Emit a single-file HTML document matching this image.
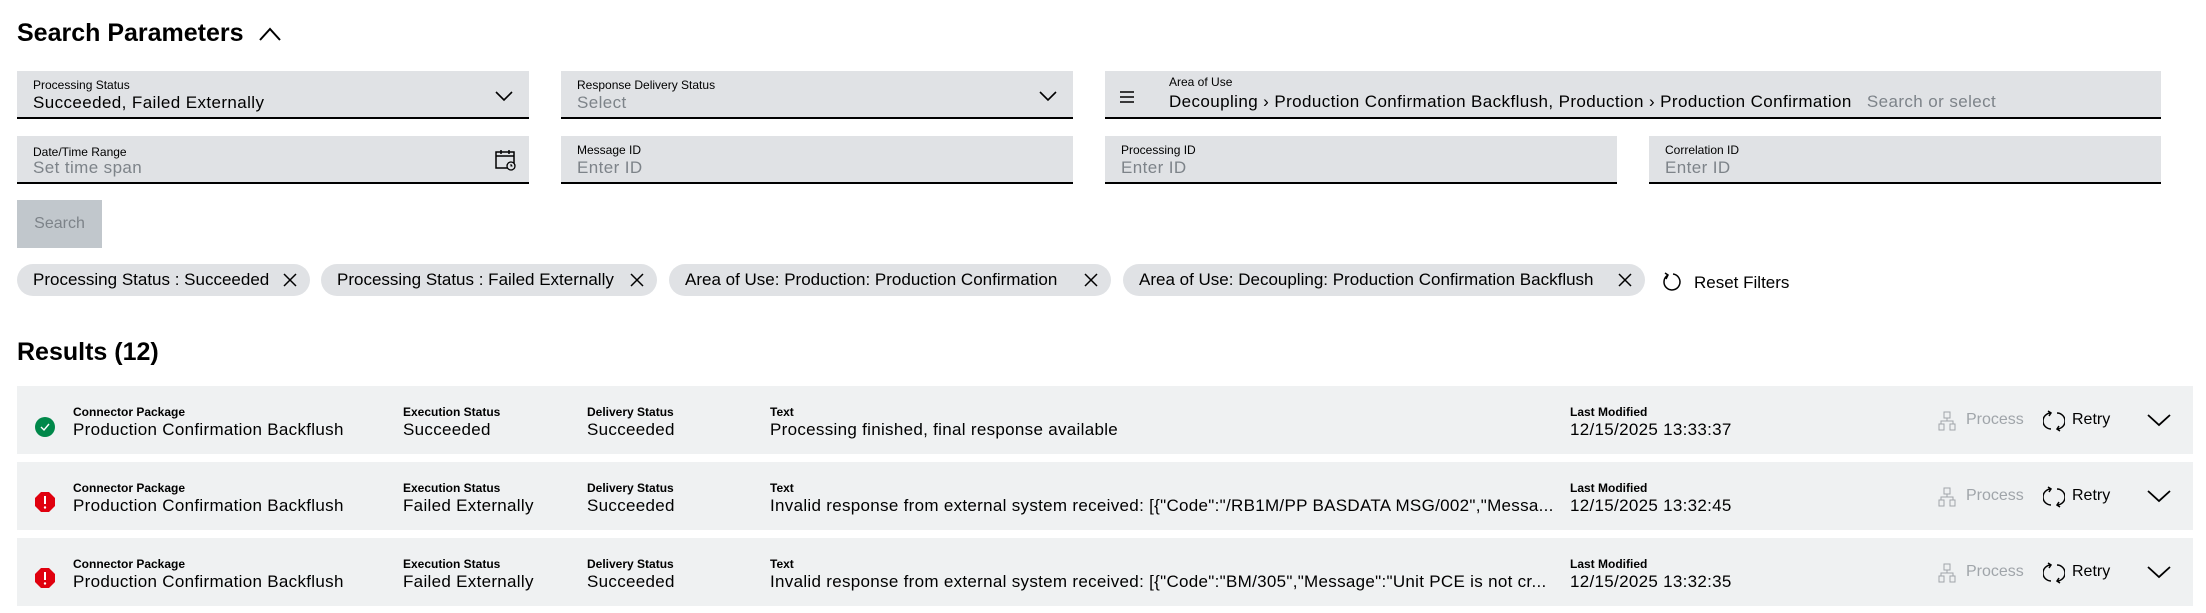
<!DOCTYPE html>
<html><head><meta charset="utf-8"><style>
*{box-sizing:border-box;margin:0;padding:0}
body{width:2206px;height:613px;background:#fff;font-family:"Liberation Sans",sans-serif;color:#000;position:relative;overflow:hidden}
.a{position:absolute;white-space:nowrap}
.h{font-weight:bold;font-size:25px}
.f{position:absolute;background:#e0e2e5;border-bottom:2px solid #000;height:48px}
.fl{position:absolute;left:16px;top:7px;font-size:12px;color:#000}
.fv{position:absolute;left:16px;top:22px;font-size:17px;letter-spacing:0.4px;color:#000;white-space:nowrap}
.ph{color:#7d8389}
.chip{position:absolute;top:264px;height:32px;border-radius:16px;background:#e0e2e5;font-size:17px;letter-spacing:0;line-height:32px;padding-left:16px;white-space:nowrap}
.chip svg{position:absolute;right:12px;top:8px}
.row{position:absolute;left:17px;width:2176px;height:68px;background:#eff1f2}
.lb{position:absolute;top:19px;font-size:12px;font-weight:bold;white-space:nowrap}
.vl{position:absolute;top:34px;font-size:17px;letter-spacing:0.3px;white-space:nowrap}
.pi{position:absolute;left:1938px}
.pt{position:absolute;left:1966px;font-size:16px;color:#a0a5aa}
.ri{position:absolute;left:2043px}
.rt{position:absolute;left:2072px;font-size:16px}
.cv{position:absolute;left:2146px}
</style></head><body>
<div class="a h" style="left:17px;top:19px">Search Parameters</div>
<svg class="a" style="left:258px;top:24px" width="24" height="20" viewBox="0 0 24 20"><path d="M2 16 L12 5 L22 16" fill="none" stroke="#000" stroke-width="2"/></svg>

<div class="f" style="left:17px;top:71px;width:512px"><div class="fl">Processing Status</div><div class="fv">Succeeded, Failed Externally</div>
<svg class="a" style="right:16px;top:19px" width="18" height="12" viewBox="0 0 18 12"><path d="M1 2 L9 10 L17 2" fill="none" stroke="#000" stroke-width="1.6"/></svg></div>
<div class="f" style="left:561px;top:71px;width:512px"><div class="fl">Response Delivery Status</div><div class="fv ph">Select</div>
<svg class="a" style="right:16px;top:19px" width="18" height="12" viewBox="0 0 18 12"><path d="M1 2 L9 10 L17 2" fill="none" stroke="#000" stroke-width="1.6"/></svg></div>
<div class="f" style="left:1105px;top:71px;width:1056px">
<svg class="a" style="left:14px;top:19px" width="16" height="14" viewBox="0 0 16 14"><path d="M1 2H15M1 7H15M1 12H15" stroke="#000" stroke-width="1.5"/></svg>
<div class="fl" style="left:64px;top:4px">Area of Use</div><div class="fv" style="left:64px;top:21px">Decoupling › Production Confirmation Backflush, Production › Production Confirmation <span class="ph" style="margin-left:10px">Search or select</span></div></div>

<div class="f" style="left:17px;top:136px;width:512px"><div class="fl" style="top:9px">Date/Time Range</div><div class="fv ph" style="top:22px">Set time span</div>
<svg class="a" style="right:12px;top:13px" width="22" height="22" viewBox="0 0 22 22"><rect x="1" y="3" width="18" height="16" fill="none" stroke="#000" stroke-width="1.5"/><path d="M1 7H19M6 1V5M14 1V5" stroke="#000" stroke-width="1.5"/><circle cx="16" cy="17" r="4" fill="#e0e2e5" stroke="#000" stroke-width="1.3"/><path d="M16 15V17H17.5" stroke="#000" stroke-width="1"/></svg></div>
<div class="f" style="left:561px;top:136px;width:512px"><div class="fl">Message ID</div><div class="fv ph">Enter ID</div></div>
<div class="f" style="left:1105px;top:136px;width:512px"><div class="fl">Processing ID</div><div class="fv ph">Enter ID</div></div>
<div class="f" style="left:1649px;top:136px;width:512px"><div class="fl">Correlation ID</div><div class="fv ph">Enter ID</div></div>

<div class="a" style="left:17px;top:200px;width:85px;height:48px;background:#c1c7cc;color:#7d8389;font-size:16px;line-height:48px;text-align:center">Search</div>

<div class="chip" style="left:17px;width:293px">Processing Status : Succeeded<svg width="16" height="16" viewBox="0 0 16 16"><path d="M2 2L14 14M14 2L2 14" stroke="#000" stroke-width="1.5"/></svg></div>
<div class="chip" style="left:321px;width:336px">Processing Status : Failed Externally<svg width="16" height="16" viewBox="0 0 16 16"><path d="M2 2L14 14M14 2L2 14" stroke="#000" stroke-width="1.5"/></svg></div>
<div class="chip" style="left:669px;width:442px">Area of Use: Production: Production Confirmation<svg width="16" height="16" viewBox="0 0 16 16"><path d="M2 2L14 14M14 2L2 14" stroke="#000" stroke-width="1.5"/></svg></div>
<div class="chip" style="left:1123px;width:522px">Area of Use: Decoupling: Production Confirmation Backflush<svg width="16" height="16" viewBox="0 0 16 16"><path d="M2 2L14 14M14 2L2 14" stroke="#000" stroke-width="1.5"/></svg></div>
<svg class="a" style="left:1662px;top:271px" width="22" height="22" viewBox="0 0 22 22"><path d="M6 4 A8 8 0 1 0 11 3" fill="none" stroke="#000" stroke-width="1.5"/><path d="M3 2 L6 4 L4 8" fill="none" stroke="#000" stroke-width="1.5"/></svg>
<div class="a" style="left:1694px;top:273px;font-size:17px">Reset Filters</div>

<div class="a h" style="left:17px;top:338px">Results (12)</div>

<div class="row" style="top:386px">
<svg class="a" style="left:18px;top:31px" width="20" height="20" viewBox="0 0 20 20"><circle cx="10" cy="10" r="10" fill="#00884a"/><path d="M6 10 L9 13 L14 7" fill="none" stroke="#fff" stroke-width="1.4"/></svg>
<div class="lb" style="left:56px">Connector Package</div><div class="vl" style="left:56px">Production Confirmation Backflush</div>
<div class="lb" style="left:386px">Execution Status</div><div class="vl" style="left:386px">Succeeded</div>
<div class="lb" style="left:570px">Delivery Status</div><div class="vl" style="left:570px">Succeeded</div>
<div class="lb" style="left:753px">Text</div><div class="vl" style="left:753px">Processing finished, final response available</div>
<div class="lb" style="left:1553px">Last Modified</div><div class="vl" style="left:1553px">12/15/2025 13:33:37</div>
</div>
<div class="row" style="top:462px">
<svg class="a" style="left:18px;top:30px" width="20" height="20" viewBox="0 0 20 20"><path d="M6 0H14L20 6V14L14 20H6L0 14V6Z" fill="#e0000e"/><path d="M10 4V12" stroke="#fff" stroke-width="2"/><circle cx="10" cy="15.5" r="1.2" fill="#fff"/></svg>
<div class="lb" style="left:56px">Connector Package</div><div class="vl" style="left:56px">Production Confirmation Backflush</div>
<div class="lb" style="left:386px">Execution Status</div><div class="vl" style="left:386px">Failed Externally</div>
<div class="lb" style="left:570px">Delivery Status</div><div class="vl" style="left:570px">Succeeded</div>
<div class="lb" style="left:753px">Text</div><div class="vl" style="left:753px;width:790px;overflow:hidden">Invalid response from external system received: [{"Code":"/RB1M/PP BASDATA MSG/002","Messa...</div>
<div class="lb" style="left:1553px">Last Modified</div><div class="vl" style="left:1553px">12/15/2025 13:32:45</div>
</div>
<div class="row" style="top:538px">
<svg class="a" style="left:18px;top:30px" width="20" height="20" viewBox="0 0 20 20"><path d="M6 0H14L20 6V14L14 20H6L0 14V6Z" fill="#e0000e"/><path d="M10 4V12" stroke="#fff" stroke-width="2"/><circle cx="10" cy="15.5" r="1.2" fill="#fff"/></svg>
<div class="lb" style="left:56px">Connector Package</div><div class="vl" style="left:56px">Production Confirmation Backflush</div>
<div class="lb" style="left:386px">Execution Status</div><div class="vl" style="left:386px">Failed Externally</div>
<div class="lb" style="left:570px">Delivery Status</div><div class="vl" style="left:570px">Succeeded</div>
<div class="lb" style="left:753px">Text</div><div class="vl" style="left:753px;width:790px;overflow:hidden">Invalid response from external system received: [{"Code":"BM/305","Message":"Unit PCE is not cr...</div>
<div class="lb" style="left:1553px">Last Modified</div><div class="vl" style="left:1553px">12/15/2025 13:32:35</div>
</div>

<svg class="pi" style="top:411px" width="18" height="20" viewBox="0 0 18 20"><rect x="6" y="1" width="6" height="6" fill="none" stroke="#a0a5aa"/><path d="M9 7V10M3 13V10H15V13" fill="none" stroke="#a0a5aa"/><rect x="1" y="13" width="5" height="6" fill="none" stroke="#a0a5aa"/><rect x="12" y="13" width="5" height="6" fill="none" stroke="#a0a5aa"/></svg>
<div class="pt" style="top:411px">Process</div>
<svg class="ri" style="top:410px" width="22" height="22" viewBox="0 0 22 22"><path d="M8 3 A8 8 0 0 0 8 19" fill="none" stroke="#000" stroke-width="1.5"/><path d="M14 3 A8 8 0 0 1 14 19" fill="none" stroke="#000" stroke-width="1.5"/><path d="M5 1L8 3L6 6M17 21L14 19L16 16" fill="none" stroke="#000" stroke-width="1.5"/></svg>
<div class="rt" style="top:411px">Retry</div>
<svg class="cv" style="top:412px" width="26" height="16" viewBox="0 0 26 16"><path d="M2 3L13 13L24 3" fill="none" stroke="#000" stroke-width="1.8"/></svg>

<svg class="pi" style="top:487px" width="18" height="20" viewBox="0 0 18 20"><rect x="6" y="1" width="6" height="6" fill="none" stroke="#a0a5aa"/><path d="M9 7V10M3 13V10H15V13" fill="none" stroke="#a0a5aa"/><rect x="1" y="13" width="5" height="6" fill="none" stroke="#a0a5aa"/><rect x="12" y="13" width="5" height="6" fill="none" stroke="#a0a5aa"/></svg>
<div class="pt" style="top:487px">Process</div>
<svg class="ri" style="top:486px" width="22" height="22" viewBox="0 0 22 22"><path d="M8 3 A8 8 0 0 0 8 19" fill="none" stroke="#000" stroke-width="1.5"/><path d="M14 3 A8 8 0 0 1 14 19" fill="none" stroke="#000" stroke-width="1.5"/><path d="M5 1L8 3L6 6M17 21L14 19L16 16" fill="none" stroke="#000" stroke-width="1.5"/></svg>
<div class="rt" style="top:487px">Retry</div>
<svg class="cv" style="top:488px" width="26" height="16" viewBox="0 0 26 16"><path d="M2 3L13 13L24 3" fill="none" stroke="#000" stroke-width="1.8"/></svg>

<svg class="pi" style="top:563px" width="18" height="20" viewBox="0 0 18 20"><rect x="6" y="1" width="6" height="6" fill="none" stroke="#a0a5aa"/><path d="M9 7V10M3 13V10H15V13" fill="none" stroke="#a0a5aa"/><rect x="1" y="13" width="5" height="6" fill="none" stroke="#a0a5aa"/><rect x="12" y="13" width="5" height="6" fill="none" stroke="#a0a5aa"/></svg>
<div class="pt" style="top:563px">Process</div>
<svg class="ri" style="top:562px" width="22" height="22" viewBox="0 0 22 22"><path d="M8 3 A8 8 0 0 0 8 19" fill="none" stroke="#000" stroke-width="1.5"/><path d="M14 3 A8 8 0 0 1 14 19" fill="none" stroke="#000" stroke-width="1.5"/><path d="M5 1L8 3L6 6M17 21L14 19L16 16" fill="none" stroke="#000" stroke-width="1.5"/></svg>
<div class="rt" style="top:563px">Retry</div>
<svg class="cv" style="top:564px" width="26" height="16" viewBox="0 0 26 16"><path d="M2 3L13 13L24 3" fill="none" stroke="#000" stroke-width="1.8"/></svg>
</body></html>
